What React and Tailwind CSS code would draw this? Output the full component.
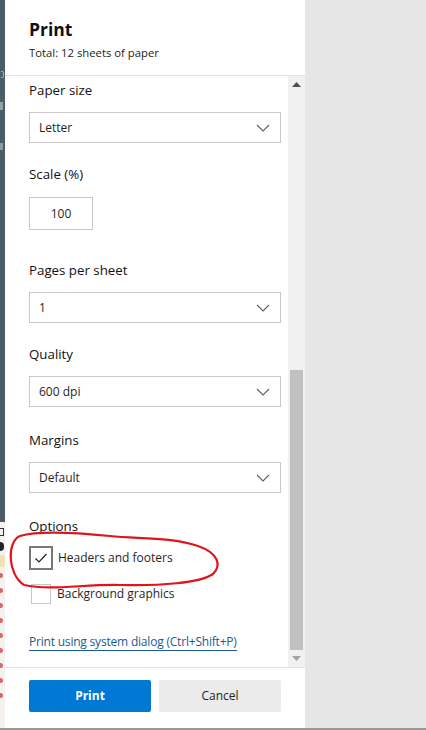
import React from "react";

const font = { fontFamily: '"Open Sans", "Noto Sans", sans-serif' };

function Chevron() {
  return (
    <svg width="14" height="8" viewBox="0 0 14 8" className="shrink-0">
      <polyline points="1,1 7,7 13,1" fill="none" stroke="#5f5f5f" strokeWidth="1.1" />
    </svg>
  );
}

function Select({ value }) {
  return (
    <div className="flex h-[31px] w-[252px] items-center justify-between border border-[#c8c8c8] bg-white pl-[9px] pr-[10px]">
      <span className="text-[12px] text-[#1f1f1f]">{value}</span>
      <Chevron />
    </div>
  );
}

function Label({ children, className = "" }) {
  return <div className={"h-[20px] text-[13.3px] leading-[20px] text-[#111] " + className}>{children}</div>;
}

function Mark({ className }) {
  return <div className={"shrink-0 " + className} />;
}

export default function App() {
  return (
    <div className="relative flex h-[730px] w-[426px] flex-col overflow-hidden bg-[#e6e6e6]" style={font}>
      <div className="flex h-[728px]">
        {/* left sliver of underlying page */}
        <div className="flex w-[5px] flex-col overflow-hidden">
          <div className="flex h-[522px] flex-col bg-[#4b5e66]">
            <Mark className="ml-[1px] mt-[71px] h-[7px] w-[3px] rounded-r-[2px] border border-l-0 border-[#aab4b8]" />
            <Mark className="ml-[0px] mt-[24px] h-[8px] w-[3px] bg-[#95a1a6]" />
            <Mark className="ml-[0px] mt-[33px] h-[7px] w-[3px] bg-[#8f9ba0]" />
          </div>
          <div className="flex flex-1 flex-col bg-[#f4f1ee]">
            <Mark className="mt-[6px] h-[8px] w-[4px] border border-l-0 border-[#333]" />
            <Mark className="mt-[6px] h-[9px] w-[4px] rounded-r-full bg-[#222]" />
            <Mark className="mt-[4px] h-[12px] w-[5px] bg-[#efe2b8]" />
            <div className="flex flex-col gap-[10px] pt-[6px]">
              <Mark className="h-[5px] w-[3px] rounded-r-full bg-[#d56a6d]" />
              <Mark className="h-[5px] w-[3px] rounded-r-full bg-[#d56a6d]" />
              <Mark className="h-[5px] w-[3px] rounded-r-full bg-[#d56a6d]" />
              <Mark className="h-[5px] w-[3px] rounded-r-full bg-[#d56a6d]" />
              <Mark className="h-[5px] w-[3px] rounded-r-full bg-[#d56a6d]" />
              <Mark className="h-[5px] w-[3px] rounded-r-full bg-[#d56a6d]" />
              <Mark className="h-[5px] w-[3px] rounded-r-full bg-[#d56a6d]" />
              <Mark className="h-[5px] w-[3px] rounded-r-full bg-[#d56a6d]" />
              <Mark className="h-[5px] w-[3px] rounded-r-full bg-[#d56a6d]" />
            </div>
          </div>
        </div>

        {/* print panel */}
        <div className="flex w-[300px] flex-col bg-white">
          <div className="h-[76px] border-b border-[#e3e3e3] px-[24px] pt-[16px]">
            <div className="text-[17.5px] font-bold leading-[26px] text-[#111]">Print</div>
            <div className="mt-[3px] text-[11.3px] leading-[16px] text-[#222]">Total: 12 sheets of paper</div>
          </div>

          <div className="flex h-[591px]">
            <div className="flex-1 pl-[24px] pt-[4px]">
              <Label>Paper size</Label>
              <div className="mt-[12px]">
                <Select value="Letter" />
              </div>

              <Label className="mt-[21px]">Scale (%)</Label>
              <div className="mt-[13px] flex h-[33px] w-[64px] items-center justify-center border border-[#c8c8c8] text-[12px] text-[#1f1f1f]">
                100
              </div>

              <Label className="mt-[30px]">Pages per sheet</Label>
              <div className="mt-[12px]">
                <Select value="1" />
              </div>

              <Label className="mt-[21px]">Quality</Label>
              <div className="mt-[12px]">
                <Select value="600 dpi" />
              </div>

              <Label className="mt-[23px]">Margins</Label>
              <div className="mt-[12px]">
                <Select value="Default" />
              </div>

              <Label className="mt-[23px]">Options</Label>
              <div className="mt-[10px] flex h-[24px] items-center">
                <div className="flex h-[24px] w-[24px] items-center justify-center border-2 border-[#787878]">
                  <svg width="14" height="12" viewBox="0 0 14 12">
                    <polyline points="1.5,6.5 5,10 12.5,2" fill="none" stroke="#222" strokeWidth="1.2" />
                  </svg>
                </div>
                <span className="ml-[5px] text-[12px] text-[#1f1f1f]">Headers and footers</span>
              </div>
              <div className="mt-[14px] flex h-[20px] items-center">
                <div className="ml-[2px] h-[20px] w-[20px] border border-[#c6c6c6]" />
                <span className="ml-[6px] text-[12px] text-[#1f1f1f]">Background graphics</span>
              </div>

              <div className="mt-[29px] inline-block border-b border-[#1a5a96] text-[12px] leading-[17px] tracking-[-0.2px] text-[#1a5a96]">
                Print using system dialog (Ctrl+Shift+P)
              </div>
            </div>

            {/* scrollbar */}
            <div className="flex w-[17px] flex-col items-center bg-[#f1f1f1]">
              <div className="flex h-[17px] w-full items-center justify-center">
                <svg width="9" height="5" viewBox="0 0 9 5">
                  <polygon points="0,5 4.5,0 9,5" fill="#505050" />
                </svg>
              </div>
              <div className="w-full flex-1 px-[2px] pt-[277px]">
                <div className="h-full w-full bg-[#c1c1c1]" />
              </div>
              <div className="flex h-[17px] w-full items-center justify-center">
                <svg width="9" height="5" viewBox="0 0 9 5">
                  <polygon points="0,0 4.5,5 9,0" fill="#a3a3a3" />
                </svg>
              </div>
            </div>
          </div>

          <div className="flex flex-1 gap-[8px] border-t border-[#e3e3e3] px-[24px] pt-[12px]">
            <button className="h-[32px] w-[122px] rounded-[2px] bg-[#0078d4] text-[12px] font-bold text-white">
              Print
            </button>
            <button className="h-[32px] w-[122px] rounded-[2px] bg-[#ebebeb] text-[12px] text-[#222]">
              Cancel
            </button>
          </div>
        </div>

        <div className="flex-1 bg-[#e6e6e6]" />
      </div>
      <div className="h-[2px] bg-[#9c9694]" />

      {/* red hand-drawn annotation */}
      <svg className="pointer-events-none absolute left-0 top-0" width="426" height="730" viewBox="0 0 426 730">
        <path
          d="M 198 546 C 170 537, 140 539, 110 536 C 80 533, 40 530, 20 536 C 7 541, 7 574, 24 585 C 50 591, 85 584, 120 585 C 160 586, 200 583, 213 574 C 222 565, 218 553, 198 546"
          fill="none"
          stroke="#e0141b"
          strokeWidth="2.2"
        />
      </svg>
    </div>
  );
}
